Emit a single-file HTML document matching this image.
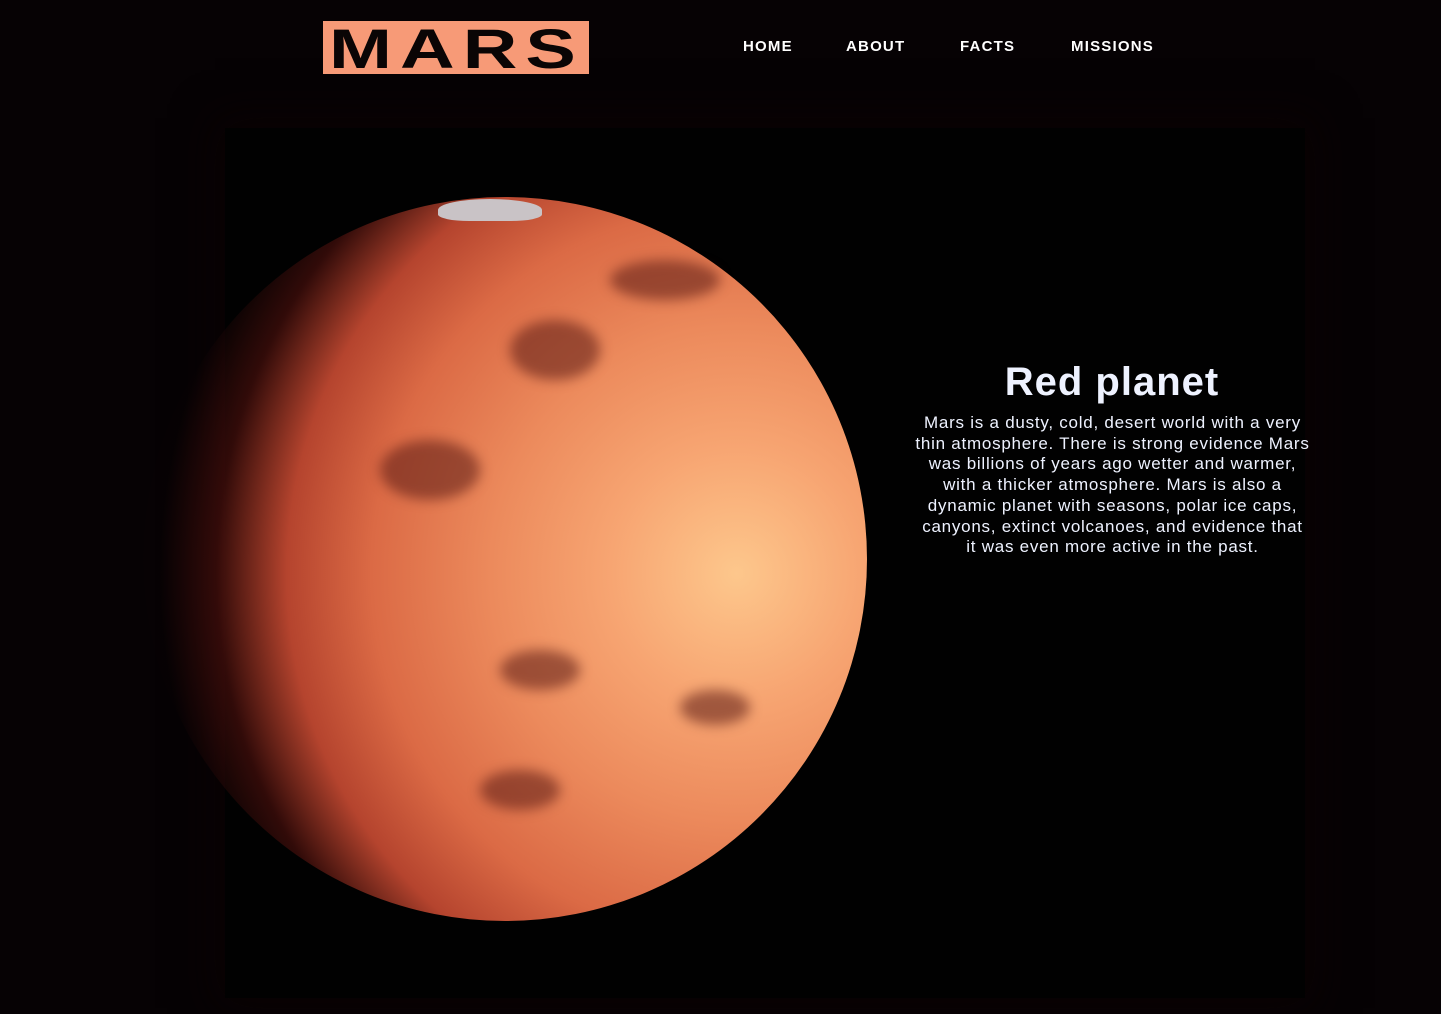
<!DOCTYPE html>
<html><head><style>
html,body{margin:0;padding:0;background:#060204;width:1441px;height:1014px;overflow:hidden;font-family:"Liberation Sans",sans-serif}
.logo{position:absolute;left:323px;top:21px;width:266px;height:53px;background:#f79a77;color:#0a0505;font:900 56px/55px "Liberation Sans",sans-serif;letter-spacing:6px;text-align:center;overflow:hidden}
.logo span{display:inline-block;transform:scaleX(1.35)}
.nav{position:absolute;top:38px;color:#fff;font:bold 15px "Liberation Sans",sans-serif;letter-spacing:1.2px}
.panel{position:absolute;left:225px;top:128px;width:1080px;height:870px;background:#010101;box-shadow:0 0 40px 10px #0a0203}
.planet{position:absolute;left:143px;top:197px;width:724px;height:724px;border-radius:50%;
background:radial-gradient(circle at 82% 52%,#fdc78c 0%,#f7a572 18%,#ec8a5c 35%,#db6a45 52%,#b5442e 64%,rgba(70,15,12,0.7) 74%,rgba(10,2,3,0.3) 82%,rgba(0,0,0,0) 88%);}
.spot{position:absolute;border-radius:50%;background:rgba(90,25,20,0.55);filter:blur(6px)}
.cap{position:absolute;left:438px;top:199px;width:104px;height:22px;border-radius:50% 50% 30% 30%;background:#c9c3c6}
h1{position:absolute;left:912px;top:360px;width:400px;margin:0;text-align:center;color:#eef2ff;font:bold 40px "Liberation Sans",sans-serif;letter-spacing:1px}
p{position:absolute;left:893px;top:413px;width:439px;margin:0;text-align:center;color:#eef2ff;font:17px/20.7px "Liberation Sans",sans-serif;letter-spacing:0.75px;white-space:nowrap}
</style></head><body>
<div class="panel"></div>
<div class="planet"></div>
<div class="spot" style="left:380px;top:440px;width:100px;height:60px"></div>
<div class="spot" style="left:510px;top:320px;width:90px;height:60px"></div>
<div class="spot" style="left:610px;top:260px;width:110px;height:40px"></div>
<div class="spot" style="left:480px;top:770px;width:80px;height:40px"></div>
<div class="spot" style="left:680px;top:690px;width:70px;height:35px"></div>
<div class="spot" style="left:500px;top:650px;width:80px;height:40px"></div>
<div class="cap"></div>
<div class="logo"><span>MARS</span></div>
<div class="nav" style="left:743px">HOME</div>
<div class="nav" style="left:846px">ABOUT</div>
<div class="nav" style="left:960px">FACTS</div>
<div class="nav" style="left:1071px">MISSIONS</div>
<h1>Red planet</h1>
<p>Mars is a dusty, cold, desert world with a very<br>thin atmosphere. There is strong evidence Mars<br>was billions of years ago wetter and warmer,<br>with a thicker atmosphere. Mars is also a<br>dynamic planet with seasons, polar ice caps,<br>canyons, extinct volcanoes, and evidence that<br>it was even more active in the past.</p>
</body></html>
